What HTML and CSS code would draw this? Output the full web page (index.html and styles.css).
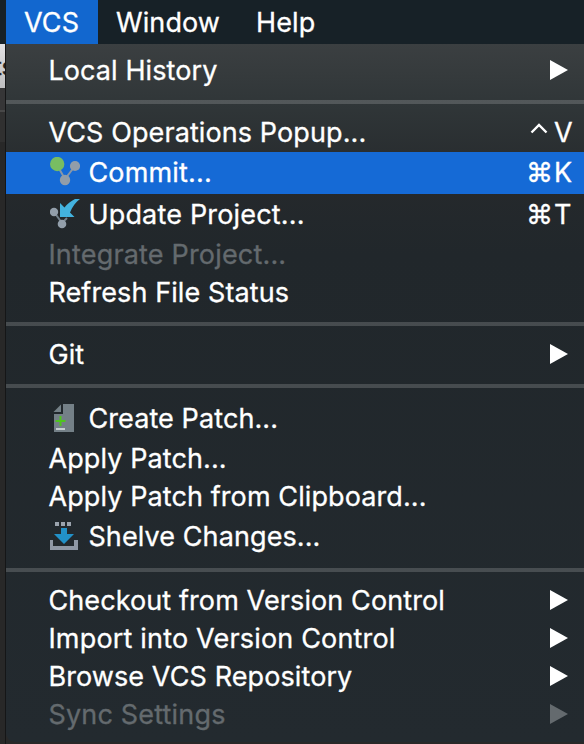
FILE: index.html
```html
<!DOCTYPE html>
<html lang="en">
<head>
<meta charset="utf-8">
<title>VCS menu</title>
<link rel="stylesheet" href="styles.css">
</head>
<body>
<div class="screen">
  <nav class="menubar">
    <span class="tab active">VCS</span>
    <span class="tab window">Window</span>
    <span class="tab help">Help</span>
  </nav>
  <div class="stage">
    <div class="backdrop"><div class="toolbar"><span>ts</span></div><div class="strip"></div><div class="pane"></div></div>
    <div class="menu">
      <div class="item"><span class="label">Local History</span><i class="arrow"></i></div>
      <div class="sep"></div>
      <div class="item"><span class="label">VCS Operations Popup...</span><span class="keys"><svg class="ctrl" viewBox="0 0 18 11"><path d="M1.500 9.500 9 2l7.500 7.500"/></svg><b>V</b></span></div>
      <div class="item tall selected">
        <svg class="icon" viewBox="0 0 30 30"><path d="M7 8 15 22 25 9" fill="none" stroke="#8997a7" stroke-width="2"/><circle cx="7.200" cy="7" r="7.200" fill="#78bd62"/><circle cx="25" cy="9" r="5.100" fill="#929da9"/><circle cx="15" cy="23" r="5.200" fill="#929da9"/></svg>
        <span class="label wide">Commit...</span><span class="keys"><span class="cmd">⌘</span><b>K</b></span></div>
      <div class="item tall">
        <svg class="icon" viewBox="0 0 30 30"><path d="M4 13 12 24 17 19" fill="none" stroke="#73808b" stroke-width="2"/><circle cx="4" cy="13" r="4.200" fill="#939fab"/><circle cx="12" cy="25" r="4.300" fill="#939fab"/><path d="M10 4v14h14.500l-4.500-4.500C22 8 26 3 30 0H25C21 2 17 5 14.500 8.500Z" fill="#43b3df"/></svg>
        <span class="label wide">Update Project...</span><span class="keys"><span class="cmd">⌘</span><b>T</b></span></div>
      <div class="item disabled"><span class="label wide">Integrate Project...</span></div>
      <div class="item"><span class="label">Refresh File Status</span></div>
      <div class="sep"></div>
      <div class="item"><span class="label">Git</span><i class="arrow"></i></div>
      <div class="sep"></div>
      <div class="item tall">
        <svg class="icon" viewBox="1 0 30 30"><path d="M14 1H25V29H5V11H14Z" fill="#748087"/><path d="M12 1.500V9H4.500Z" fill="#748087"/><path d="M6.500 18h10M11.500 13v10" stroke="#4fc51e" stroke-width="2"/><path d="M7 26h9" stroke="#c6ced0" stroke-width="2"/></svg>
        <span class="label">Create Patch...</span></div>
      <div class="item"><span class="label">Apply Patch...</span></div>
      <div class="item"><span class="label">Apply Patch from Clipboard...</span></div>
      <div class="item tall">
        <svg class="icon" viewBox="1 0 30 30"><path d="M6 1h4v4H6zM12 1h4v4h-4zM18 1h4v4h-4z" fill="#9ba3ad"/><path d="M1 19h3v6h21v-6h4v10H1z" fill="#8f98a5"/><path d="M12 7h6v6h7L15 23 5 13h7z" fill="#2291c8"/></svg>
        <span class="label">Shelve Changes...</span></div>
      <div class="sep"></div>
      <div class="item"><span class="label">Checkout from Version Control</span><i class="arrow"></i></div>
      <div class="item"><span class="label wide">Import into Version Control</span><i class="arrow"></i></div>
      <div class="item"><span class="label">Browse VCS Repository</span><i class="arrow"></i></div>
      <div class="item disabled"><span class="label wide">Sync Settings</span><i class="arrow"></i></div>
    </div>
  </div>
</div>
</body>
</html>
```
FILE: styles.css
```css
* { box-sizing: border-box; }
body { margin: 0; background: #282828; }
.screen {
  width: 584px; height: 744px; overflow: hidden;
  font: 400 27px/38px Inter, "Liberation Sans", sans-serif;
  -webkit-text-stroke: .3px currentColor;
  color: #fff;
}
.menubar { display: flex; height: 44px; padding-left: 6px; background: #172127; line-height: 45px; letter-spacing: .1px; }
.tab { padding-left: 18px; white-space: nowrap; }
.active { width: 92px; background: #1267cf; }
.window { width: 140px; }
.stage { display: flex; height: 700px; }
.backdrop { width: 6px; flex: none; overflow: hidden; background: #282828; border-right: 1px solid #151617; }
.toolbar { height: 44px; background: linear-gradient(#e2e1e3, #bebec0); color: #222; font-size: 24px; line-height: 46px; }
.toolbar span { margin-left: -6px; }
.strip { height: 24px; background: #363637; border-bottom: 2px solid #484848; }
.pane { height: 30px; background: #303030; }
.menu {
  flex: 1; min-width: 0; height: 698px; padding: 8px 0;
  border-bottom-left-radius: 9px;
  background: linear-gradient(#3b3f41 0, #303638 60px, #25292c 140px, #21272b 210px, #232a2f 100%);
}
.item { display: flex; align-items: center; height: 38px; padding: 0 12px 0 43px; white-space: nowrap; }
.label { margin-left: -.6px; letter-spacing: .1px; }
.wide { letter-spacing: .18px; }
.tall { height: 42px; }
.selected { background: #156ad6; }
.disabled { color: #646a6e; }
.sep { height: 24px; padding: 10px 0; }
.sep::before { content: ""; display: block; height: 4px; background: rgba(255, 255, 255, .17); }
.icon { width: 30px; height: 30px; margin: -2px 9px 0 1px; flex: none; }
.arrow { margin: -2px 4px 0 auto; width: 18px; height: 20px; background: currentColor; clip-path: polygon(0 0, 100% 50%, 0 100%); }
.keys { margin-left: auto; display: flex; align-items: center; }
.keys b { width: 18px; font-weight: 400; }
.cmd { margin-right: 1px; }
.ctrl { width: 18px; height: 11px; margin: -10px 6px 0 0; fill: none; stroke: #fff; stroke-width: 2.400; }
```
